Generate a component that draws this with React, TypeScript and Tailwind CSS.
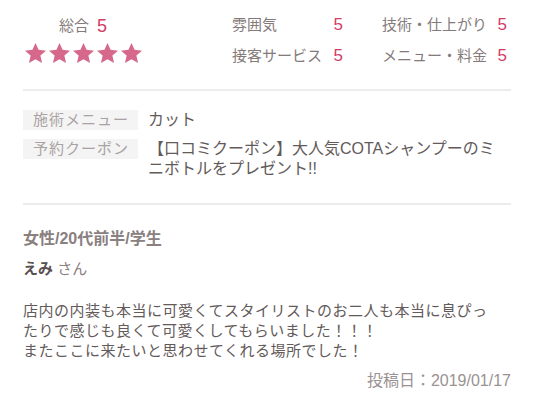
import React from "react";

const font = { fontFamily: '"Liberation Sans", "Noto Sans CJK JP", sans-serif' };

function Star() {
  return (
    <svg width="23" height="23" viewBox="0 0 24 24" className="block">
      <polygon
        points="12,1 15.2,8.2 23,9 17.1,14.2 18.8,22 12,18 5.2,22 6.9,14.2 1,9 8.8,8.2"
        fill="#d5688b"
      />
    </svg>
  );
}

function Score({ label, value }: { label: string; value: string }) {
  return (
    <div className="flex items-center justify-between h-[20px] leading-[20px]">
      <span className="text-[15px] text-[#857a7a]">{label}</span>
      <span className="text-[17px] text-[#d23d64]">{value}</span>
    </div>
  );
}

export default function App() {
  return (
    <div className="w-[534px] h-[400px] bg-white overflow-hidden" style={font}>
      <div className="px-[23px]">
        {/* top ratings */}
        <div className="flex h-[89px]">
          <div className="w-[120px] flex flex-col items-center pt-[16px]">
            <div className="h-[20px] leading-[20px] flex items-center gap-[8px]">
              <span className="text-[15px] text-[#857a7a]">総合</span>
              <span className="text-[18px] text-[#d23d64]">5</span>
            </div>
            <div className="mt-[6px] flex gap-[1px]">
              <Star />
              <Star />
              <Star />
              <Star />
              <Star />
            </div>
          </div>
          <div className="ml-auto mr-[4px] pt-[15px] grid grid-cols-[111px_125px] gap-x-[39px] gap-y-[11px] h-fit">
            <Score label="雰囲気" value="5" />
            <Score label="技術・仕上がり" value="5" />
            <Score label="接客サービス" value="5" />
            <Score label="メニュー・料金" value="5" />
          </div>
        </div>
        <div className="h-[2px] bg-[#ececec]" />

        {/* menu / coupon */}
        <div className="pt-[19px] flex flex-col gap-[9px] h-[112px]">
          <div className="flex gap-[10px]">
            <div className="w-[115px] h-[20px] shrink-0 bg-[#f4f4f4] pl-[10px] text-[15px] leading-[20px] tracking-[1px] text-[#aaa2a2]">
              施術メニュー
            </div>
            <div className="text-[16px] leading-[20px] text-[#635a5a]">カット</div>
          </div>
          <div className="flex gap-[10px]">
            <div className="w-[115px] h-[20px] shrink-0 bg-[#f4f4f4] pl-[10px] text-[15px] leading-[20px] tracking-[1px] text-[#aaa2a2]">
              予約クーポン
            </div>
            <div className="w-[350px] text-[16px] leading-[20px] text-[#635a5a]">
              【口コミクーポン】大人気COTAシャンプーのミニボトルをプレゼント!!
            </div>
          </div>
        </div>
        <div className="h-[2px] bg-[#ececec]" />

        {/* review */}
        <div className="pt-[24px]">
          <div className="h-[20px] leading-[20px] text-[16px] font-semibold text-[#8a8080]">
            女性/20代前半/学生
          </div>
          <div className="mt-[10px] h-[20px] leading-[20px] text-[15px]">
            <span className="font-bold text-[#5a5050]">えみ</span>
            <span className="text-[#8a8080]"> さん</span>
          </div>
          <div className="mt-[22px] text-[15px] leading-[20px] tracking-[0.5px] text-[#635a5a]">
            店内の内装も本当に可愛くてスタイリストのお二人も本当に息ぴっ
            <br />
            たりで感じも良くて可愛くしてもらいました！！！
            <br />
            またここに来たいと思わせてくれる場所でした！
          </div>
          <div className="mt-[10px] h-[20px] leading-[20px] text-right text-[16px] text-[#9a9292]">
            投稿日：2019/01/17
          </div>
        </div>
      </div>
    </div>
  );
}
